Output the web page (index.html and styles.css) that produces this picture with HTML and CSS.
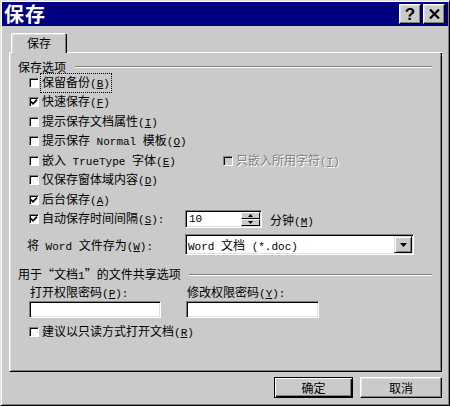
FILE: index.html
```html
<!DOCTYPE html>
<html lang="zh-CN">
<head>
<meta charset="utf-8">
<title>保存</title>
<link rel="stylesheet" href="styles.css">
</head>
<body>
<div class="window">
  <div class="titlebar">
    <span class="title">保存</span>
    <div class="caps">
      <span class="capbtn">?</span>
      <span class="capbtn"><svg width="11" height="10" viewBox="0 0 11 10"><path d="M1 0.5 L10 9.5 M10 0.5 L1 9.5" stroke="#000" stroke-width="2.2" fill="none"/></svg></span>
    </div>
  </div>
  <div class="main">
    <div class="tabstrip">
      <span class="tabpad"></span>
      <div class="tab">保存</div>
      <span class="tabfill"></span>
    </div>
    <div class="panel">
      <div class="ghead"><span>保存选项</span><span class="gline"></span></div>
      <div class="opts">
        <div class="row"><span class="cb"></span><span class="lbl focus">保留备份<span class="en">(<u>B</u>)</span></span></div>
        <div class="row"><span class="cb on"><svg width="8" height="8" viewBox="0 0 8 8"><polyline points="1,3.6 3,5.8 7,1.6" fill="none" stroke="#000" stroke-width="1.7"/></svg></span><span class="lbl">快速保存<span class="en">(<u>F</u>)</span></span></div>
        <div class="row"><span class="cb"></span><span class="lbl">提示保存文档属性<span class="en">(<u>I</u>)</span></span></div>
        <div class="row"><span class="cb"></span><span class="lbl">提示保存<span class="en"> Normal </span>模板<span class="en">(<u>O</u>)</span></span></div>
        <div class="row">
          <div class="cell-a"><span class="cb"></span><span class="lbl">嵌入<span class="en"> TrueType </span>字体<span class="en">(<u>E</u>)</span></span></div>
          <span class="cb off"></span><span class="lbl dis">只嵌入所用字符<span class="en">(<u>T</u>)</span></span>
        </div>
        <div class="row"><span class="cb"></span><span class="lbl">仅保存窗体域内容<span class="en">(<u>D</u>)</span></span></div>
        <div class="row"><span class="cb on"><svg width="8" height="8" viewBox="0 0 8 8"><polyline points="1,3.6 3,5.8 7,1.6" fill="none" stroke="#000" stroke-width="1.7"/></svg></span><span class="lbl">后台保存<span class="en">(<u>A</u>)</span></span></div>
        <div class="row">
          <div class="cell-b"><span class="cb on"><svg width="8" height="8" viewBox="0 0 8 8"><polyline points="1,3.6 3,5.8 7,1.6" fill="none" stroke="#000" stroke-width="1.7"/></svg></span><span class="lbl">自动保存时间间隔<span class="en">(<u>S</u>):</span></span></div>
          <div class="spin field">
            <span class="spintext en">10</span>
            <span class="spinbtns">
              <span class="sb"><svg width="5" height="3" viewBox="0 0 5 3"><polygon points="0,3 2.5,0 5,3" fill="#000"/></svg></span>
              <span class="sb"><svg width="5" height="3" viewBox="0 0 5 3"><polygon points="0,0 5,0 2.5,3" fill="#000"/></svg></span>
            </span>
          </div>
          <span class="unit">分钟<span class="en">(<u>M</u>)</span></span>
        </div>
      </div>
      <div class="comborow">
        <span class="clabel">将<span class="en"> Word </span>文件存为<span class="en">(<u>W</u>):</span></span>
        <div class="combo field">
          <span class="combotext"><span class="en">Word </span>文档<span class="en"> (*.doc)</span></span>
          <span class="drop"><svg width="7" height="4" viewBox="0 0 7 4"><polygon points="0,0 7,0 3.5,4" fill="#000"/></svg></span>
        </div>
      </div>
      <div class="ghead g2"><span>用于<span class="q">“</span>文档<span class="en">1</span><span class="q">”</span>的文件共享选项</span><span class="gline"></span></div>
      <div class="pw">
        <span class="pwlabel">打开权限密码<span class="en">(<u>P</u>):</span></span>
        <span class="pwlabel">修改权限密码<span class="en">(<u>Y</u>):</span></span>
        <span class="field pwin w1"></span>
        <span class="field pwin w2"></span>
      </div>
      <div class="row ro"><span class="cb"></span><span class="lbl">建议以只读方式打开文档<span class="en">(<u>R</u>)</span></span></div>
    </div>
    <div class="btnrow">
      <button class="btn default">确定</button>
      <button class="btn cancel">取消</button>
    </div>
  </div>
</div>
</body>
</html>
```

FILE: styles.css
```css
* { box-sizing: border-box; }
html, body { margin: 0; padding: 0; }
body {
  width: 450px;
  height: 406px;
  background: #cacaca;
  font-family: "Noto Sans CJK SC", sans-serif;
  font-size: 12px;
  color: #000;
}
.window {
  width: 450px;
  height: 406px;
  border: 1px solid;
  border-color: #dfdfdf #000 #000 #dfdfdf;
  box-shadow: inset 1px 1px #fff, inset -1px -1px #808080;
  padding: 1px;
  background: #cacaca;
  display: flex;
  flex-direction: column;
}
.titlebar {
  height: 24px;
  flex: none;
  background: #000080;
  display: flex;
  align-items: center;
  justify-content: space-between;
  padding: 0 3px 0 2px;
}
.title {
  color: #fff;
  font-weight: bold;
  font-size: 20px;
  line-height: 24px;
  letter-spacing: 1px;
}
.caps { display: flex; gap: 2px; }
.capbtn {
  width: 22px;
  height: 20px;
  background: #cacaca;
  border: 1px solid;
  border-color: #fff #000 #000 #fff;
  box-shadow: inset -1px -1px #808080, inset 1px 1px #dfdfdf;
  display: flex;
  align-items: center;
  justify-content: center;
  font: bold 17px "Liberation Sans", sans-serif;
  line-height: 1;
}
.main {
  padding: 7px 6px 0 7px;
  display: flex;
  flex-direction: column;
}
.tabstrip { display: flex; height: 20px; }
.tabpad { width: 2px; border-bottom: 1px solid #fff; }
.tabfill { flex: 1; border-bottom: 1px solid #fff; }
.tab {
  width: 56px;
  height: 20px;
  border: 1px solid;
  border-color: #fff #000 transparent #fff;
  border-bottom: none;
  border-radius: 2px 2px 0 0;
  box-shadow: inset -1px 0 #808080, inset 1px 1px #dfdfdf;
  text-align: center;
  line-height: 18px;
}
.panel {
  height: 319px;
  border: 1px solid;
  border-color: transparent #000 #000 #fff;
  border-top: none;
  box-shadow: inset 1px 0 #dfdfdf, inset -1px -1px #808080;
  padding: 7px 9px 0 8px;
}
.en {
  font-family: "Liberation Mono", monospace;
  font-size: 11px;
  white-space: pre;
}
.q { display: inline-block; width: 12px; text-align: center; }
.ghead {
  height: 13px;
  display: flex;
  align-items: center;
  gap: 9px;
  line-height: 13px;
  white-space: nowrap;
}
.gline {
  flex: 1;
  height: 2px;
  border-top: 1px solid #808080;
  border-bottom: 1px solid #fff;
}
.g2 { margin-top: 13px; gap: 8px; }
.opts { padding-left: 11px; }
.row {
  height: 19.5px;
  display: flex;
  align-items: center;
  white-space: nowrap;
}
.cb {
  width: 10px;
  height: 10px;
  flex: none;
  margin-right: 2px;
  background: #fff;
  border: 1px solid;
  border-color: #808080 #fff #fff #808080;
  box-shadow: inset 1px 1px #000;
  display: flex;
  align-items: center;
  justify-content: center;
}
.cb.off { background: #cacaca; }
.lbl { padding: 0 1px; line-height: 15px; }
.focus { outline: 1px dotted #000; outline-offset: 0; }
.dis { color: #808080; text-shadow: 1px 1px #fff; }
.cell-a { width: 194px; display: flex; align-items: center; }
.cell-b { width: 156px; display: flex; align-items: center; }
.field {
  background: #fff;
  border: 1px solid;
  border-color: #808080 #fff #fff #808080;
  box-shadow: inset 1px 1px #000, inset -1px -1px #dfdfdf;
}
.spin {
  width: 77px;
  height: 18px;
  padding: 1px;
  display: flex;
  align-items: stretch;
}
.spintext { flex: 1; padding-left: 2px; line-height: 14px; }
.spinbtns { width: 19px; display: flex; flex-direction: column; }
.sb {
  flex: 1;
  background: #cacaca;
  border: 1px solid;
  border-color: #fff #000 #000 #fff;
  display: flex;
  align-items: center;
  justify-content: center;
}
.unit { margin-left: 8px; }
.comborow {
  margin-top: 5px;
  height: 21px;
  padding-left: 9px;
  display: flex;
  align-items: center;
  white-space: nowrap;
}
.clabel { width: 158px; }
.combo {
  width: 229px;
  height: 21px;
  padding: 1px;
  display: flex;
  align-items: stretch;
}
.combotext { flex: 1; padding-left: 1px; line-height: 17px; }
.drop {
  width: 18px;
  background: #cacaca;
  border: 1px solid;
  border-color: #dfdfdf #000 #000 #dfdfdf;
  box-shadow: inset 1px 1px #fff, inset -1px -1px #808080;
  display: flex;
  align-items: center;
  justify-content: center;
}
.pw {
  display: grid;
  grid-template-columns: 157px 133px;
  row-gap: 2px;
  padding-left: 11px;
  margin-top: 4px;
}
.pwlabel { height: 14px; line-height: 14px; padding-left: 1px; white-space: nowrap; }
.pwin { height: 17px; display: block; }
.w1 { width: 132px; }
.w2 { width: 133px; }
.ro { margin-top: 4px; padding-left: 11px; }
.btnrow {
  margin-top: 5px;
  display: flex;
  justify-content: flex-end;
  gap: 7px;
}
.btn {
  height: 21px;
  padding: 0;
  margin: 0;
  font: inherit;
  color: #000;
  background: #cacaca;
  border: 1px solid;
  border-color: #fff #000 #000 #fff;
  box-shadow: inset -1px -1px #808080, inset 1px 1px #dfdfdf;
  line-height: 17px;
}
.btn.default {
  width: 79px;
  border-color: #000;
  box-shadow: inset 1px 1px #fff, inset -1px -1px #000, inset -2px -2px #808080;
}
.btn.cancel { width: 82px; }
```
